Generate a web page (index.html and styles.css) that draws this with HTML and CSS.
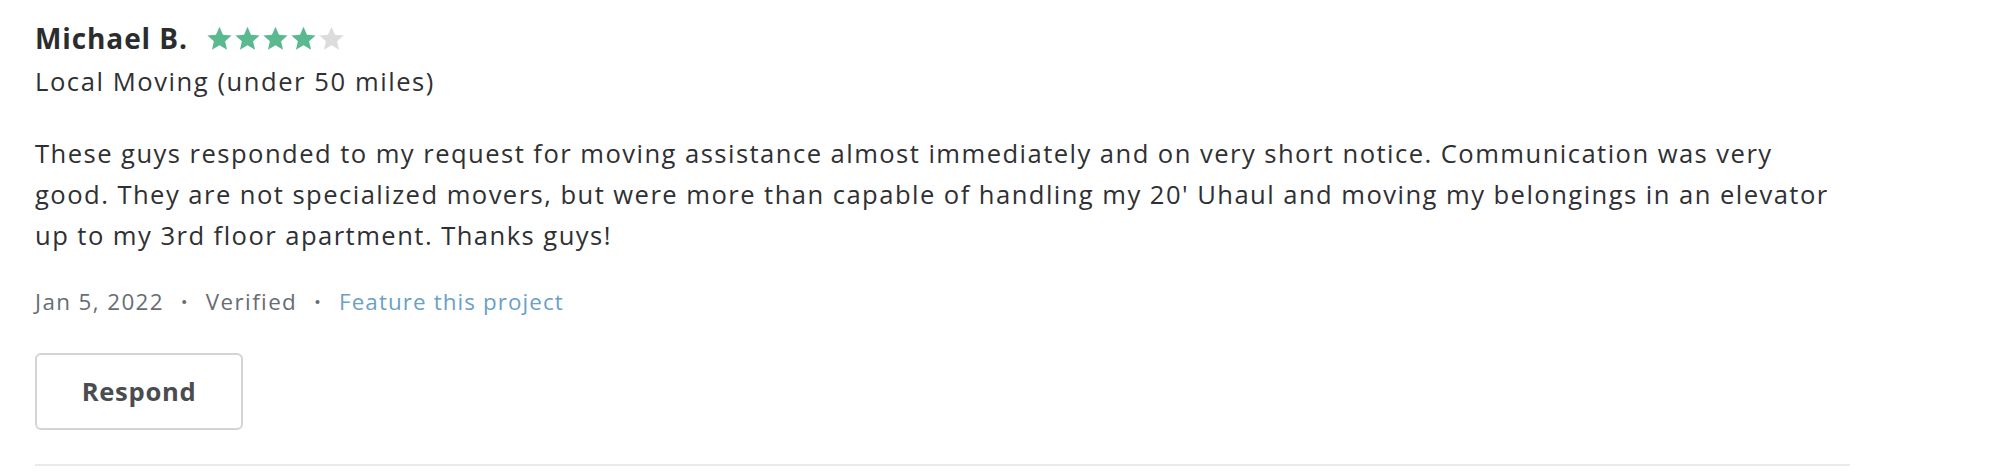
FILE: index.html
```html
<!DOCTYPE html>
<html lang="en">
<head>
<meta charset="utf-8">
<title>Review</title>
<link rel="stylesheet" href="styles.css">
</head>
<body>
<div class="review">
  <div class="header">
    <span class="name">Michael B.</span>
    <span class="stars">
      <svg class="star on" viewBox="0 0 24 24"><path d="M12 1.5l3.1 7.1 7.7.7-5.8 5.1 1.7 7.6L12 18l-6.7 4 1.7-7.6-5.8-5.1 7.7-.7z"/></svg>
      <svg class="star on" viewBox="0 0 24 24"><path d="M12 1.5l3.1 7.1 7.7.7-5.8 5.1 1.7 7.6L12 18l-6.7 4 1.7-7.6-5.8-5.1 7.7-.7z"/></svg>
      <svg class="star on" viewBox="0 0 24 24"><path d="M12 1.5l3.1 7.1 7.7.7-5.8 5.1 1.7 7.6L12 18l-6.7 4 1.7-7.6-5.8-5.1 7.7-.7z"/></svg>
      <svg class="star on" viewBox="0 0 24 24"><path d="M12 1.5l3.1 7.1 7.7.7-5.8 5.1 1.7 7.6L12 18l-6.7 4 1.7-7.6-5.8-5.1 7.7-.7z"/></svg>
      <svg class="star off" viewBox="0 0 24 24"><path d="M12 1.5l3.1 7.1 7.7.7-5.8 5.1 1.7 7.6L12 18l-6.7 4 1.7-7.6-5.8-5.1 7.7-.7z"/></svg>
    </span>
  </div>
  <div class="category">Local Moving (under 50 miles)</div>
  <p class="body">These guys responded to my request for moving assistance almost immediately and on very short notice. Communication was very good. They are not specialized movers, but were more than capable of handling my 20' Uhaul and moving my belongings in an elevator up to my 3rd floor apartment. Thanks guys!</p>
  <div class="meta">
    <span>Jan 5, 2022</span>
    <span class="dot">·</span>
    <span>Verified</span>
    <span class="dot">·</span>
    <a class="link" href="#">Feature this project</a>
  </div>
  <button class="respond" type="button">Respond</button>
</div>
</body>
</html>
```
FILE: styles.css
```css
html, body {
  margin: 0;
  padding: 0;
  background: #ffffff;
}
body {
  font-family: "Open Sans", "Noto Sans", sans-serif;
  color: #2f3033;
}
.review {
  margin-left: 35px;
  width: 1815px;
  padding-top: 20px;
  padding-bottom: 34px;
  border-bottom: 2px solid #e9eaeb;
}
.header {
  display: flex;
  align-items: center;
  gap: 18px;
  height: 36px;
}
.name {
  font-size: 28px;
  line-height: 36px;
  font-weight: 700;
  letter-spacing: 0.9px;
  color: #2b2c2e;
}
.stars {
  display: flex;
  gap: 1px;
}
.star {
  width: 27px;
  height: 27px;
}
.star.on { fill: #5bb98f; }
.star.off { fill: #dcdcdc; }
.category {
  margin-top: 8px;
  font-size: 25.6px;
  line-height: 36px;
  letter-spacing: 1.55px;
}
.body {
  margin: 33px 0 0 0;
  max-width: 1807px;
  font-size: 25.6px;
  line-height: 41px;
  letter-spacing: 1.45px;
}
.meta {
  margin-top: 31px;
  display: flex;
  align-items: center;
  gap: 17px;
  font-size: 22.4px;
  line-height: 30px;
  letter-spacing: 1.4px;
  color: #676d73;
}
.dot { font-weight: 700; }
.link {
  color: #6a9fc8;
  text-decoration: none;
  letter-spacing: 1.1px;
}
.respond {
  display: block;
  margin-top: 36px;
  width: 208px;
  height: 77px;
  background: #fff;
  border: 2px solid #d3d4d5;
  border-radius: 6px;
  font-family: "Open Sans", "Noto Sans", sans-serif;
  font-size: 25.6px;
  font-weight: 700;
  letter-spacing: 0.7px;
  color: #4a4c50;
}
```
